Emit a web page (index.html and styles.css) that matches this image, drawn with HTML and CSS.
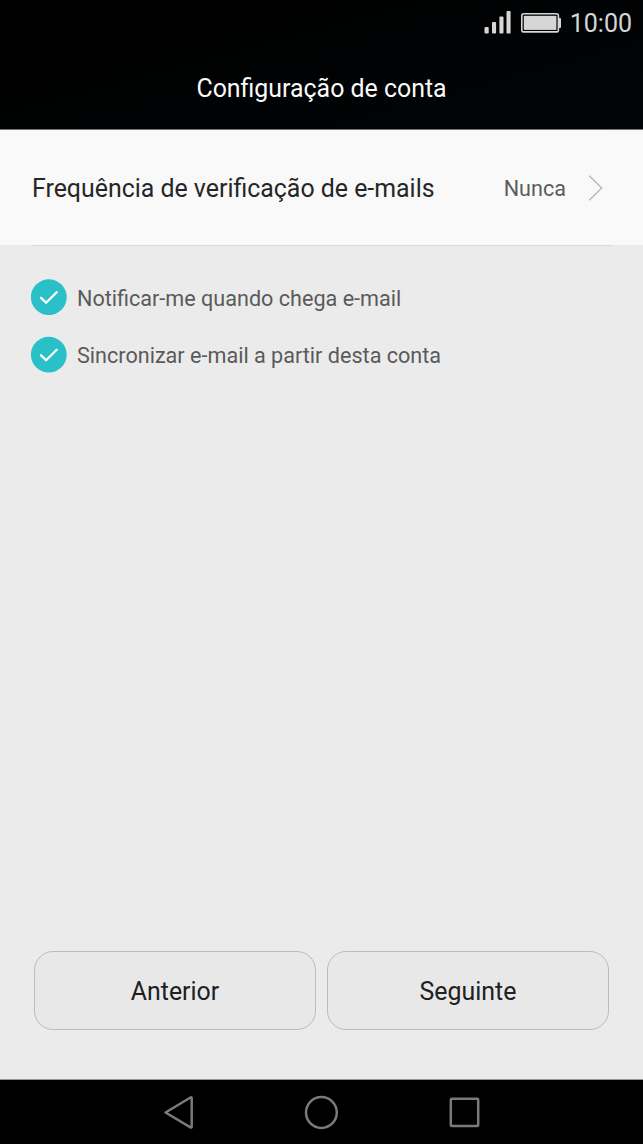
FILE: index.html
```html
<!DOCTYPE html>
<html lang="pt">
<head>
<meta charset="utf-8">
<title>Configuração de conta</title>
<link rel="stylesheet" href="styles.css">
</head>
<body>
<div class="screen">
  <header class="header">
    <div class="status">
      <svg class="status-icons" width="78" height="46" viewBox="484 0 78 46">
        <g fill="#d6d6d6">
          <rect x="484.5" y="27" width="4.2" height="6.5" rx="1"/>
          <rect x="492" y="22" width="4.1" height="11.5" rx="1"/>
          <rect x="499.4" y="16.5" width="4.1" height="17" rx="1"/>
          <rect x="506.5" y="11" width="4.1" height="22.5" rx="1"/>
          <rect x="523.8" y="15.8" width="32.6" height="14.1"/>
          <path d="M559 18h1q1 0 1 1v8q0 1-1 1h-1z"/>
        </g>
        <rect x="521.8" y="13.8" width="36.6" height="18.1" rx="2" fill="none" stroke="#d6d6d6" stroke-width="1.6"/>
      </svg>
      <span class="clock">10:00</span>
    </div>
    <h1 class="title">Configuração de conta</h1>
  </header>
  <main class="content">
    <div class="setting">
      <span class="setting-name">Frequência de verificação de e-mails</span>
      <span class="setting-value">Nunca</span>
      <svg class="chevron" width="16" height="28" viewBox="0 0 16 28"><path d="M1.2 1.8 13.7 14 1.2 26.2" fill="none" stroke="#b5b5b5" stroke-width="1.3"/></svg>
    </div>
    <div class="divider"></div>
    <div class="options">
      <div class="option">
        <svg width="36" height="36" viewBox="0 0 36 36"><circle cx="17.8" cy="18.2" r="17.9" fill="#2ac0c7"/><path d="M10 18.8l5.1 4.9 10.6-10.4" fill="none" stroke="#fff" stroke-width="2.3" stroke-linecap="round" stroke-linejoin="round"/></svg>
        <span class="option-label">Notificar-me quando chega e-mail</span>
      </div>
      <div class="option">
        <svg width="36" height="37" viewBox="0 0 36 37"><circle cx="17.8" cy="18.7" r="17.9" fill="#2ac0c7"/><path d="M10 19.3l5.1 4.9 10.6-10.4" fill="none" stroke="#fff" stroke-width="2.3" stroke-linecap="round" stroke-linejoin="round"/></svg>
        <span class="option-label">Sincronizar e-mail a partir desta conta</span>
      </div>
    </div>
    <div class="actions">
      <button class="button">Anterior</button>
      <button class="button">Seguinte</button>
    </div>
  </main>
  <nav class="navbar">
    <svg width="643" height="64" viewBox="0 1080 643 64" fill="none" stroke="#7a7a7a" stroke-width="2.5" stroke-linejoin="round">
      <path d="M165.5 1112.5 190.5 1097.5Q191.7 1097 191.7 1098.5V1126.5Q191.7 1128 190.5 1127.4Z"/>
      <circle cx="321.4" cy="1112.5" r="15.4"/>
      <rect x="450.8" y="1098.8" width="27.4" height="27.2" rx="1"/>
    </svg>
  </nav>
</div>
</body>
</html>
```
FILE: styles.css
```css
body {
  margin: 0;
  font-family: Roboto, "Liberation Sans", sans-serif;
}

.screen {
  display: flex;
  flex-direction: column;
  width: 643px;
  height: 1144px;
  overflow: hidden;
  background: #ebebeb;
}

.header {
  box-sizing: border-box;
  height: 130px;
  border-bottom: 1px solid #77777b;
  background: linear-gradient(165deg, #000 20%, #010507 100%);
}

.status {
  display: flex;
  justify-content: flex-end;
  gap: 8px;
  height: 46px;
  padding-right: 11px;
}

.clock {
  color: #d6d6d6;
  font-size: 25px;
  line-height: 48px;
}

.title {
  margin: 0;
  color: #fafafa;
  font-size: 24.9px;
  font-weight: 400;
  line-height: 86px;
  text-align: center;
}

.content {
  display: flex;
  flex: 1;
  flex-direction: column;
  box-sizing: border-box;
  border-bottom: 1px solid #999;
}

.setting {
  display: flex;
  align-items: center;
  height: 115px;
  padding: 0 39px 0 32px;
  background: #f9f9f9;
}

.setting-name {
  flex: 1;
  color: #262626;
  font-size: 24.9px;
  line-height: 30px;
  padding-top: 2px;
}

.setting-value {
  margin-right: 22px;
  padding-top: 2px;
  color: #5c5c5c;
  font-size: 21.6px;
}

.divider {
  height: 1px;
  margin: 0 31px;
  background: #dcdcdc;
}

.options {
  display: flex;
  flex: 1;
  flex-direction: column;
  gap: 21px;
  padding: 33px 31px;
}

.option {
  display: flex;
  align-items: center;
  gap: 10px;
  height: 36px;
  color: #5a5a5a;
  font-size: 21.6px;
}

.option-label {
  padding-top: 2px;
}

.actions {
  display: flex;
  gap: 11px;
  padding: 0 34px 49px 34px;
}

.button {
  flex: 1;
  height: 79px;
  padding: 2px 0 0;
  border: 1px solid #bcbcbc;
  border-radius: 19px;
  background: #e8e8e8;
  color: #202020;
  font: 24.9px Roboto, "Liberation Sans", sans-serif;
}

.navbar {
  height: 64px;
  background: #000;
}
```
